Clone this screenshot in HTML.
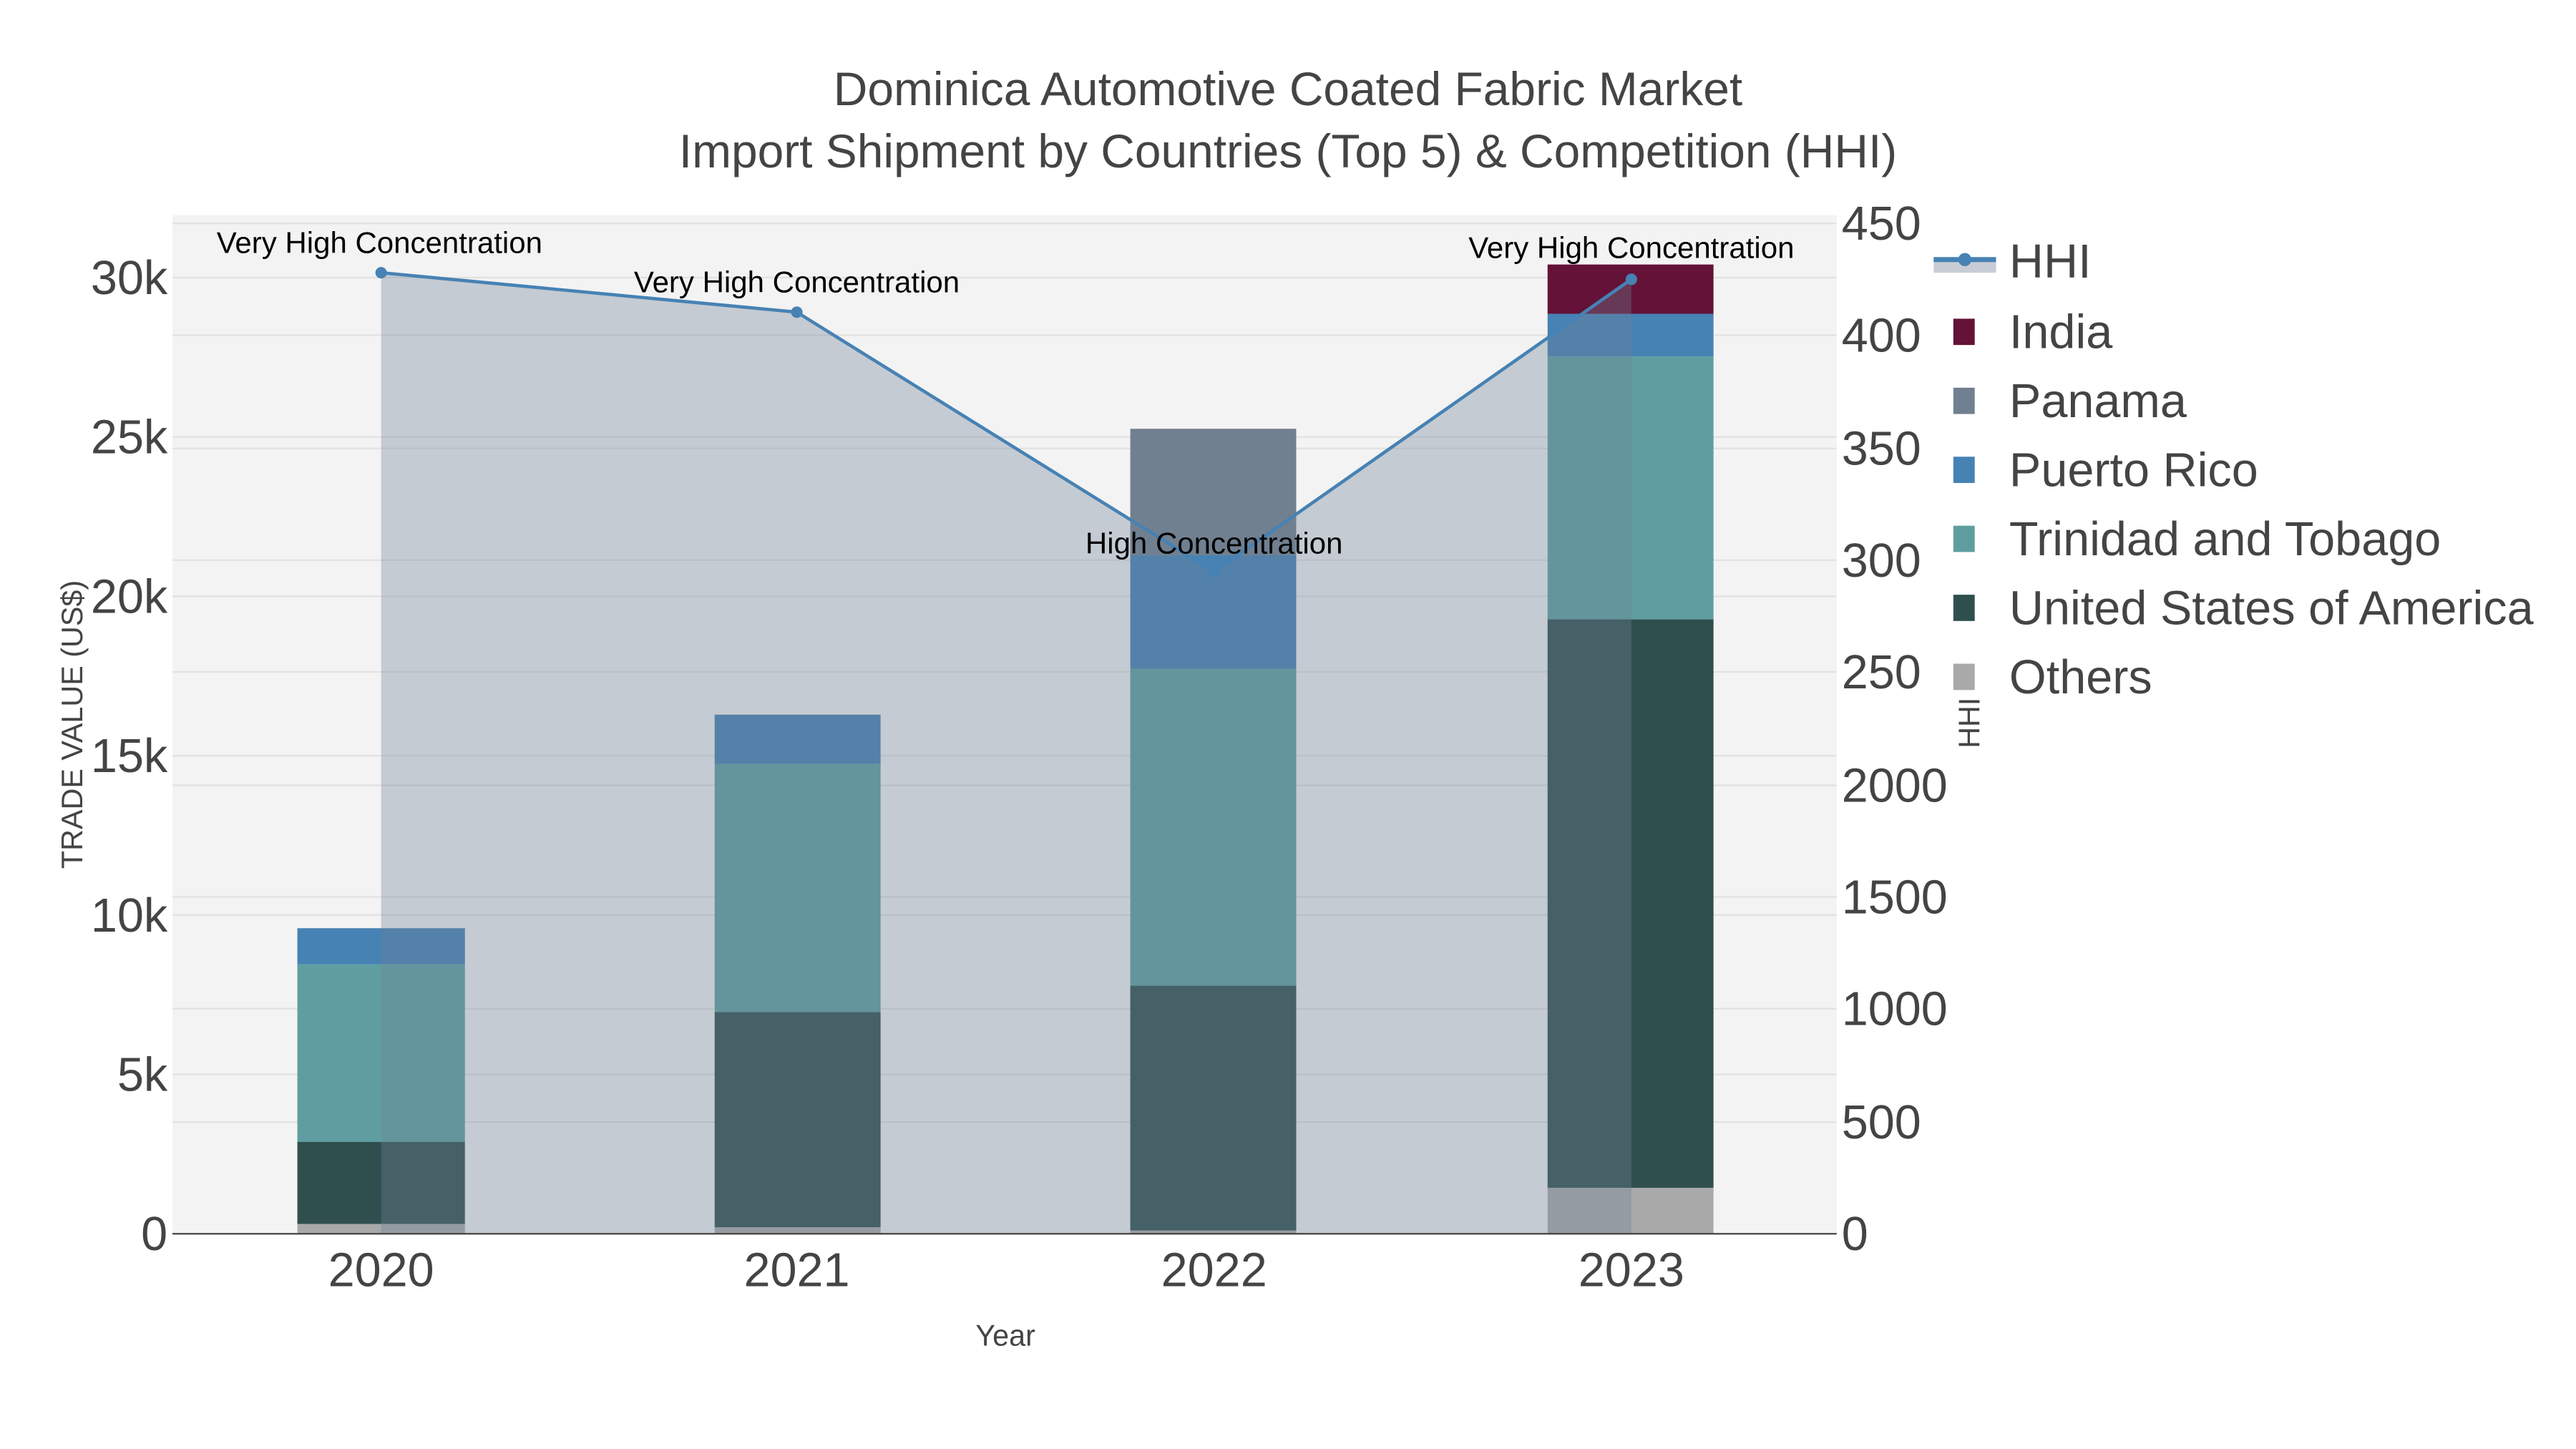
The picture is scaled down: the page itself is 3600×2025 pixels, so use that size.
<!DOCTYPE html>
<html><head><style>
html,body{margin:0;padding:0;background:#fff;}
svg{display:block;font-family:"Liberation Sans",Arial,sans-serif;}
</style></head><body>
<svg width="3600" height="2025" viewBox="0 0 1568 882" xmlns="http://www.w3.org/2000/svg">
<rect x="0" y="0" width="1568" height="882" fill="#fff"/>
<rect x="105" y="131" width="1013" height="620" fill="#f3f3f3"/>
<g stroke="#e2e2e2" stroke-width="1">
<line x1="105" x2="1118" y1="654" y2="654"/><line x1="105" x2="1118" y1="557" y2="557"/>
<line x1="105" x2="1118" y1="460" y2="460"/><line x1="105" x2="1118" y1="363" y2="363"/>
<line x1="105" x2="1118" y1="266" y2="266"/><line x1="105" x2="1118" y1="169" y2="169"/>
<line x1="105" x2="1118" y1="683" y2="683"/><line x1="105" x2="1118" y1="614" y2="614"/>
<line x1="105" x2="1118" y1="546" y2="546"/><line x1="105" x2="1118" y1="478" y2="478"/>
<line x1="105" x2="1118" y1="409" y2="409"/><line x1="105" x2="1118" y1="341" y2="341"/>
<line x1="105" x2="1118" y1="273" y2="273"/><line x1="105" x2="1118" y1="204" y2="204"/>
<line x1="105" x2="1118" y1="136" y2="136"/>
</g>
<g>
<rect x="181" y="745" width="102" height="6" fill="#a9a9a9"/>
<rect x="181" y="695" width="102" height="50" fill="#2f4f4f"/>
<rect x="181" y="587" width="102" height="108" fill="#5f9ea0"/>
<rect x="181" y="565" width="102" height="22" fill="#4682b4"/>

<rect x="435" y="747" width="101" height="4" fill="#a9a9a9"/>
<rect x="435" y="616" width="101" height="131" fill="#2f4f4f"/>
<rect x="435" y="465" width="101" height="151" fill="#5f9ea0"/>
<rect x="435" y="435" width="101" height="30" fill="#4682b4"/>

<rect x="688" y="749" width="101" height="2" fill="#a9a9a9"/>
<rect x="688" y="600" width="101" height="149" fill="#2f4f4f"/>
<rect x="688" y="407" width="101" height="193" fill="#5f9ea0"/>
<rect x="688" y="338" width="101" height="69" fill="#4682b4"/>
<rect x="688" y="261" width="101" height="77" fill="#708090"/>

<rect x="942" y="723" width="101" height="28" fill="#a9a9a9"/>
<rect x="942" y="377" width="101" height="346" fill="#2f4f4f"/>
<rect x="942" y="217" width="101" height="160" fill="#5f9ea0"/>
<rect x="942" y="191" width="101" height="26" fill="#4682b4"/>
<rect x="942" y="161" width="101" height="30" fill="#641237"/>
</g>
<polygon points="232,166 485,190 739,348 993,170 993,751 232,751" fill="rgba(112,128,150,0.35)"/>
<polyline points="232,166 485,190 739,348 993,170" fill="none" stroke="#4682b4" stroke-width="2"/>
<g fill="#4682b4"><circle cx="232" cy="166" r="3.5"/><circle cx="485" cy="190" r="3.5"/><circle cx="739" cy="348" r="3.5"/><circle cx="993" cy="170" r="3.5"/></g>
<line x1="105" x2="1118" y1="751" y2="751" stroke="#444" stroke-width="1"/>
<g font-size="18.3" fill="#000" text-anchor="middle">
<text x="231" y="154">Very High Concentration</text>
<text x="485" y="178">Very High Concentration</text>
<text x="739" y="337">High Concentration</text>
<text x="993" y="157">Very High Concentration</text>
</g>
<g fill="#444" font-size="28.7" text-anchor="middle">
<text x="784" y="64">Dominica Automotive Coated Fabric Market</text>
<text x="784" y="102">Import Shipment by Countries (Top 5) &amp; Competition (HHI)</text>
</g>
<g fill="#444" font-size="29" text-anchor="end">
<text x="102" y="761">0</text><text x="102" y="664">5k</text><text x="102" y="567">10k</text>
<text x="102" y="470">15k</text><text x="102" y="373">20k</text><text x="102" y="276">25k</text><text x="102" y="179">30k</text>
</g>
<g fill="#444" font-size="29" text-anchor="start">
<text x="1121" y="761">0</text><text x="1121" y="693">500</text><text x="1121" y="624">1000</text>
<text x="1121" y="556">1500</text><text x="1121" y="488">2000</text><text x="1121" y="419">250</text>
<text x="1121" y="351">300</text><text x="1121" y="283">350</text><text x="1121" y="214">400</text><text x="1121" y="146">450</text>
</g>
<g fill="#444" font-size="29" text-anchor="middle">
<text x="232" y="783">2020</text><text x="485" y="783">2021</text><text x="739" y="783">2022</text><text x="993" y="783">2023</text>
</g>
<text x="612" y="819" fill="#444" font-size="18" text-anchor="middle">Year</text>
<text transform="translate(50,441) rotate(-90)" fill="#444" font-size="18" text-anchor="middle">TRADE VALUE (US$)</text>
<text transform="translate(1205,440) rotate(-90)" fill="#444" font-size="18" text-anchor="middle">HHI</text>
<rect x="1177" y="159" width="38" height="7" fill="#c8cdd5"/>
<line x1="1177" x2="1215" y1="158" y2="158" stroke="#4682b4" stroke-width="3"/>
<circle cx="1196" cy="158" r="4" fill="#4682b4"/>
<g font-size="29" fill="#444">
<text x="1223" y="169">HHI</text>
<text x="1223" y="212">India</text>
<text x="1223" y="254">Panama</text>
<text x="1223" y="296">Puerto Rico</text>
<text x="1223" y="338">Trinidad and Tobago</text>
<text x="1223" y="380">United States of America</text>
<text x="1223" y="422">Others</text>
</g>
<rect x="1189" y="194" width="13" height="16" fill="#641237"/>
<rect x="1189" y="236" width="13" height="16" fill="#708090"/>
<rect x="1189" y="278" width="13" height="16" fill="#4682b4"/>
<rect x="1189" y="320" width="13" height="16" fill="#5f9ea0"/>
<rect x="1189" y="362" width="13" height="16" fill="#2f4f4f"/>
<rect x="1189" y="404" width="13" height="16" fill="#a9a9a9"/>
</svg>
</body></html>
